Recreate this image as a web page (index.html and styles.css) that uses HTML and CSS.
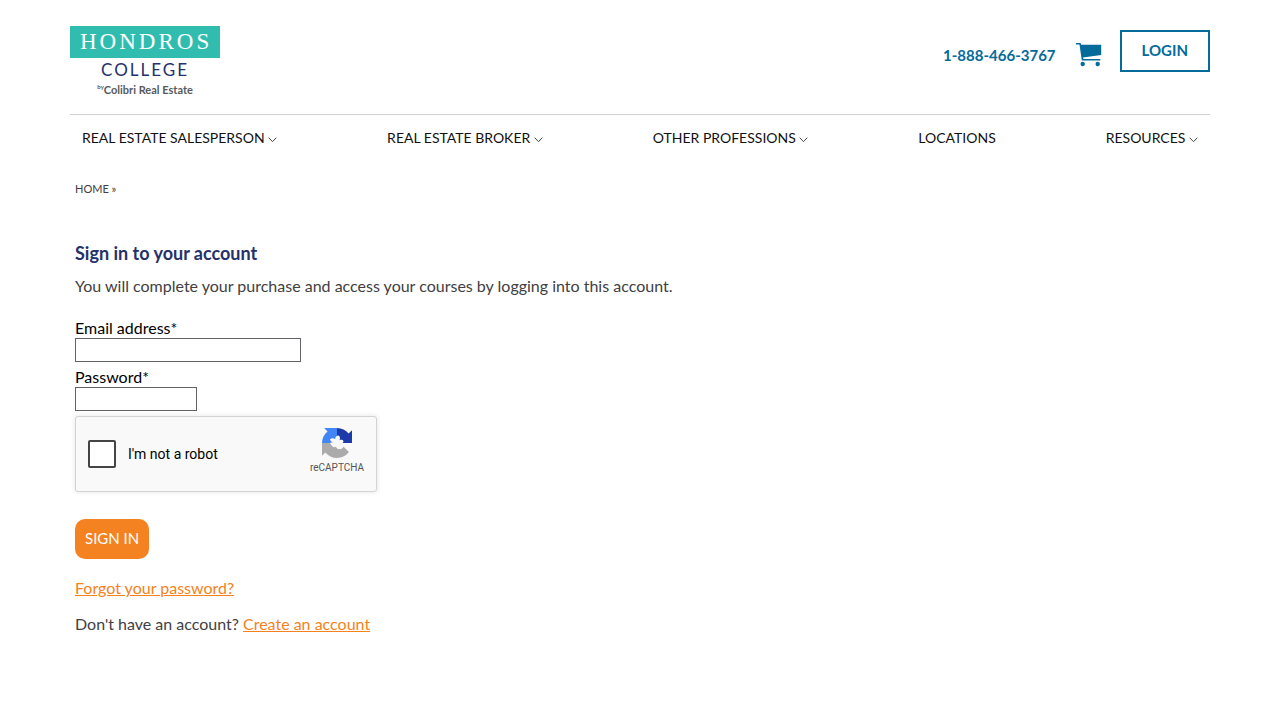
FILE: index.html
```html
<!DOCTYPE html>
<html lang="en">
<head>
  <meta charset="UTF-8">
  <meta name="viewport" content="width=device-width, initial-scale=1.0">
  <title>Sign in | Hondros College</title>
  <link rel="stylesheet" href="styles.css">
</head>
<body>

  <div class="container">
    <header class="header">
      <a class="logo" href="#">
        <span class="logo-name">HONDROS</span>
        <span class="logo-college">COLLEGE</span>
        <span class="logo-tagline"><sup>by</sup>Colibri Real Estate</span>
      </a>
      <div class="header-actions">
        <a class="phone" href="tel:18884663767">1-888-466-3767</a>
        <a class="cart" href="#" aria-label="Cart">
          <svg width="26" height="24" viewBox="0 0 26 24" fill="#056b9b">
            <path d="M0 0h4.500l.7 1.800h20v10.200L7 14.500l.3 1.500h17v1.500H5.800L3.500 1.500H0z"/>
            <circle cx="6.700" cy="21" r="2.200"/>
            <circle cx="21.700" cy="21" r="2.200"/>
          </svg>
        </a>
        <button type="button" class="login">LOGIN</button>
      </div>
    </header>

    <nav class="nav">
      <a href="#">REAL ESTATE SALESPERSON <svg class="chevron" viewBox="0 0 9 6"><path d="M.7.7l3.800 4 3.800-4"/></svg></a>
      <a href="#">REAL ESTATE BROKER <svg class="chevron" viewBox="0 0 9 6"><path d="M.7.7l3.800 4 3.800-4"/></svg></a>
      <a href="#">OTHER PROFESSIONS <svg class="chevron" viewBox="0 0 9 6"><path d="M.7.7l3.800 4 3.800-4"/></svg></a>
      <a href="#">LOCATIONS</a>
      <a href="#">RESOURCES <svg class="chevron" viewBox="0 0 9 6"><path d="M.7.7l3.800 4 3.800-4"/></svg></a>
    </nav>

    <main class="content">
      <div class="breadcrumb"><a href="#">HOME</a> »</div>

      <h1>Sign in to your account</h1>
      <p class="intro">You will complete your purchase and access your courses by logging into this account.</p>

      <form id="loginForm">
        <div class="form-group">
          <label for="email">Email address*</label>
          <input type="email" id="email" class="email" required>
        </div>
        <div class="form-group">
          <label for="password">Password*</label>
          <input type="password" id="password" class="password" required>
        </div>

        <div class="captcha">
          <input type="checkbox" id="robot">
          <label for="robot">I'm not a robot</label>
          <div class="captcha-brand">
            <svg width="30" height="30" viewBox="0 0 64 64">
              <path fill="#1c3aa9" d="M64 32V4.700l-7.200 7.200C51 4.700 42 .1 32 .1V32z"/>
              <path fill="#4285f4" d="M32 .1H4.600l7.200 7.200C4.600 13.100 0 22 0 32h32z"/>
              <path fill="#ababab" d="M0 32v27.300l7.200-7.200C13 59.300 22 63.900 32 63.900c10.400 0 19.600-5 25.400-12.600L45 39 32 32z"/>
              <path fill="#f9f9f9" d="M17 24c4-3 8-3 11 0 0-5 3-8 8-8 3 4 3 7 1 10 4-2 7-1 9 2-1 4-4 6-8 6 4 1 7 3 8 6-2 4-6 6-10 5-3 0-5-2-6-5-3 2-7 1-9-2l-4-6c3-2 6-2 8-1-4-1-7-3-8-7z"/>
            </svg>
            <span>reCAPTCHA</span>
          </div>
        </div>

        <button type="submit" class="sign-in">SIGN IN</button>
      </form>

      <p><a class="link" href="#">Forgot your password?</a></p>
      <p>Don't have an account? <a class="link" href="#">Create an account</a></p>
    </main>
  </div>

</body>
</html>
```
FILE: styles.css
```css
* {
  box-sizing: border-box;
}

body {
  margin: 0;
  background-color: #fff;
  color: #414042;
  font-family: Lato, "Liberation Sans", sans-serif;
  font-size: 16px;
  line-height: 24px;
}

a {
  color: inherit;
  text-decoration: none;
}

.container {
  max-width: 1180px;
  margin: 0 auto;
  padding: 0 20px;
}

.header {
  display: flex;
  justify-content: space-between;
  align-items: flex-start;
  padding: 26px 0 16px;
  border-bottom: 1px solid #d2d2d2;
}

.logo {
  display: flex;
  flex-direction: column;
  align-items: center;
}

.logo-name {
  padding: 0 8px 0 10px;
  background-color: #30bdb0;
  color: #fff;
  font-family: "Liberation Serif", serif;
  font-size: 23px;
  line-height: 32px;
  letter-spacing: 3px;
}

.logo-college {
  color: #25316b;
  font-size: 17px;
  line-height: 24px;
  letter-spacing: 2px;
}

.logo-tagline {
  color: #58595b;
  font-size: 11px;
  font-weight: bold;
  line-height: 16px;
}

.logo-tagline sup {
  font-size: 6px;
  line-height: 6px;
}

.header-actions {
  display: flex;
  align-items: center;
  padding-top: 4px;
}

.phone {
  padding-top: 8px;
  color: #056b9b;
  font-size: 15px;
  font-weight: bold;
}

.cart {
  display: flex;
  margin: 8px 18px 0 20px;
}

.login {
  height: 42px;
  padding: 0 20px 2px;
  border: 2px solid #056b9b;
  background-color: #fff;
  color: #056b9b;
  font-family: inherit;
  font-size: 15px;
  font-weight: bold;
  cursor: pointer;
}

.nav {
  display: flex;
  justify-content: space-between;
  padding: 11px 12px;
  color: #111;
  font-size: 14px;
}

.chevron {
  width: 9px;
  height: 6px;
  fill: none;
  stroke: #444;
}

.content {
  padding: 16px 5px;
}

.breadcrumb {
  margin-bottom: 40px;
  font-size: 11px;
}

h1 {
  margin: 0 0 9px;
  color: #25316b;
  font-size: 18px;
  font-weight: bold;
  line-height: 24px;
}

p {
  margin: 0 0 12px;
}

.intro {
  margin-bottom: 20px;
}

.form-group {
  margin-bottom: 5px;
}

.form-group label {
  display: block;
  color: #000;
  line-height: 20px;
}

.form-group input {
  display: block;
  height: 24px;
  border: 1px solid #626166;
}

.form-group .email {
  width: 226px;
}

.form-group .password {
  width: 122px;
}

.captcha {
  display: flex;
  align-items: center;
  width: 302px;
  height: 76px;
  margin-bottom: 27px;
  padding: 0 12px;
  border: 1px solid #d3d3d3;
  border-radius: 3px;
  background-color: #f9f9f9;
  box-shadow: 0 0 4px 1px rgba(0,0,0,0.08);
  color: #000;
  font-family: Roboto, sans-serif;
  font-size: 14px;
}

.captcha input {
  appearance: none;
  width: 28px;
  height: 28px;
  margin: 0 12px 0 0;
  border: 2px solid #444;
  border-radius: 2px;
  background-color: #fff;
}

.captcha-brand {
  display: flex;
  flex-direction: column;
  align-items: center;
  margin-left: auto;
  padding-bottom: 2px;
  color: #555;
  font-size: 10px;
  line-height: 20px;
}

.sign-in {
  display: block;
  height: 40px;
  margin-bottom: 17px;
  padding: 0 10px 2px;
  border: none;
  border-radius: 10px;
  background-color: #f58220;
  color: #fff;
  font-family: inherit;
  font-size: 15px;
  cursor: pointer;
}

.link {
  color: #f58220;
  text-decoration: underline;
}
```
